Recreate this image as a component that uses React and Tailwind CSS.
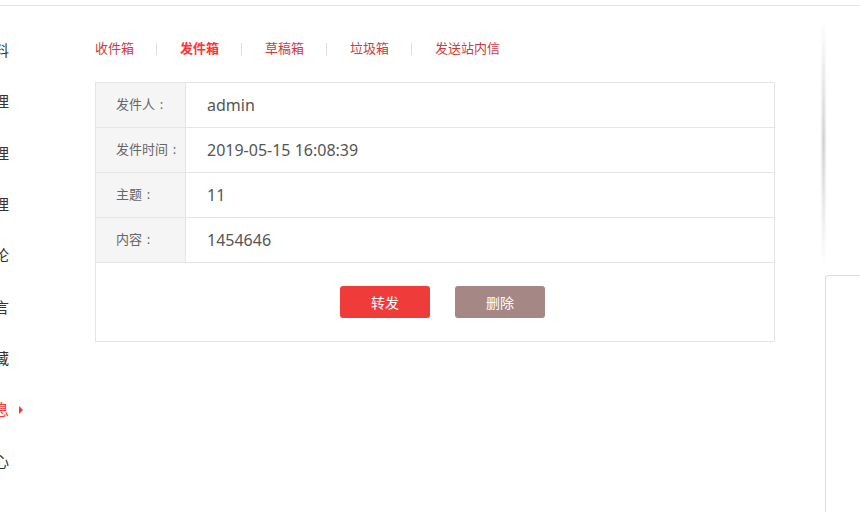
const menu = ['个人资料', '文章管理', '相册管理', '分类管理', '我的评论', '我的留言', '我的收藏', '站内消息', '个人中心']
const tabs = ['收件箱', '发件箱', '草稿箱', '垃圾箱', '发送站内信']
const rows = [
  ['发件人', 'admin'],
  ['发件时间', '2019-05-15 16:08:39'],
  ['主题', '11'],
  ['内容', '1454646'],
]

export default function App() {
  return (
    <div
      className="w-[860px] h-[512px] overflow-hidden bg-white pt-[5px]"
      style={{ fontFamily: "'Noto Sans', 'Noto Sans CJK SC', sans-serif" }}
    >
      <div className="flex h-full border-t border-[#e5e5e5]">
        {/* left menu, cut off by the window edge */}
        <div className="w-[95px] shrink-0 overflow-hidden pt-[19px]">
          {menu.map((m, i) => (
            <div key={m} className="flex items-center h-[51.3px]">
              <div
                className={`w-[9px] flex justify-end whitespace-nowrap text-[15px] leading-none ${
                  i === 7 ? 'text-[#f33]' : 'text-[#333]'
                }`}
              >
                {m}
              </div>
              {i === 7 && (
                <span className="ml-[10px] w-0 h-0 border-y-[4px] border-y-transparent border-l-[4px] border-l-[#f33]" />
              )}
            </div>
          ))}
        </div>

        {/* main */}
        <div className="w-[680px] shrink-0">
          <div className="flex items-center h-[76px] pt-[10px] text-[13px]">
            {tabs.map((t, i) => (
              <div key={t} className="flex items-center">
                <span className={i === 1 ? 'text-[#f33] font-bold' : 'text-[#cc3b3f]'}>{t}</span>
                {i < tabs.length - 1 && <span className="ml-[22px] mr-[23px] w-px h-[12px] bg-[#ddd]" />}
              </div>
            ))}
          </div>

          <div className="border border-[#e5e5e5]">
            {rows.map(([k, v]) => (
              <div key={k} className="flex h-[45px] border-b border-[#e5e5e5]">
                <div className="w-[90px] bg-[#f5f5f5] border-r border-[#e5e5e5] flex items-center pl-[20px] text-[13px] text-[#666]">
                  {k}
                  <span className="inline-block w-[13px] text-center">:</span>
                </div>
                <div className="flex-1 flex items-center pl-[21px] text-[16px] text-[#555]">{v}</div>
              </div>
            ))}
            <div className="flex justify-center items-center gap-[25px] pl-[15px] h-[78px]">
              <button className="w-[90px] h-[32px] rounded-[3px] bg-[#f03b3b] text-white text-[14px]">转发</button>
              <button className="w-[90px] h-[32px] rounded-[3px] bg-[#a58886] text-white text-[14px]">删除</button>
            </div>
          </div>
        </div>

        {/* right column */}
        <div className="flex-1 pl-[47px] flex flex-col">
          <div className="mt-[12px] h-[248px] w-[3px] rounded-full blur-[1px] bg-gradient-to-b from-transparent via-[#c8c8c8] to-transparent" />
          <div className="mt-[9px] ml-[3px] flex-1 border-l border-t border-[#ddd] rounded-tl-[4px]" />
        </div>
      </div>
    </div>
  )
}
